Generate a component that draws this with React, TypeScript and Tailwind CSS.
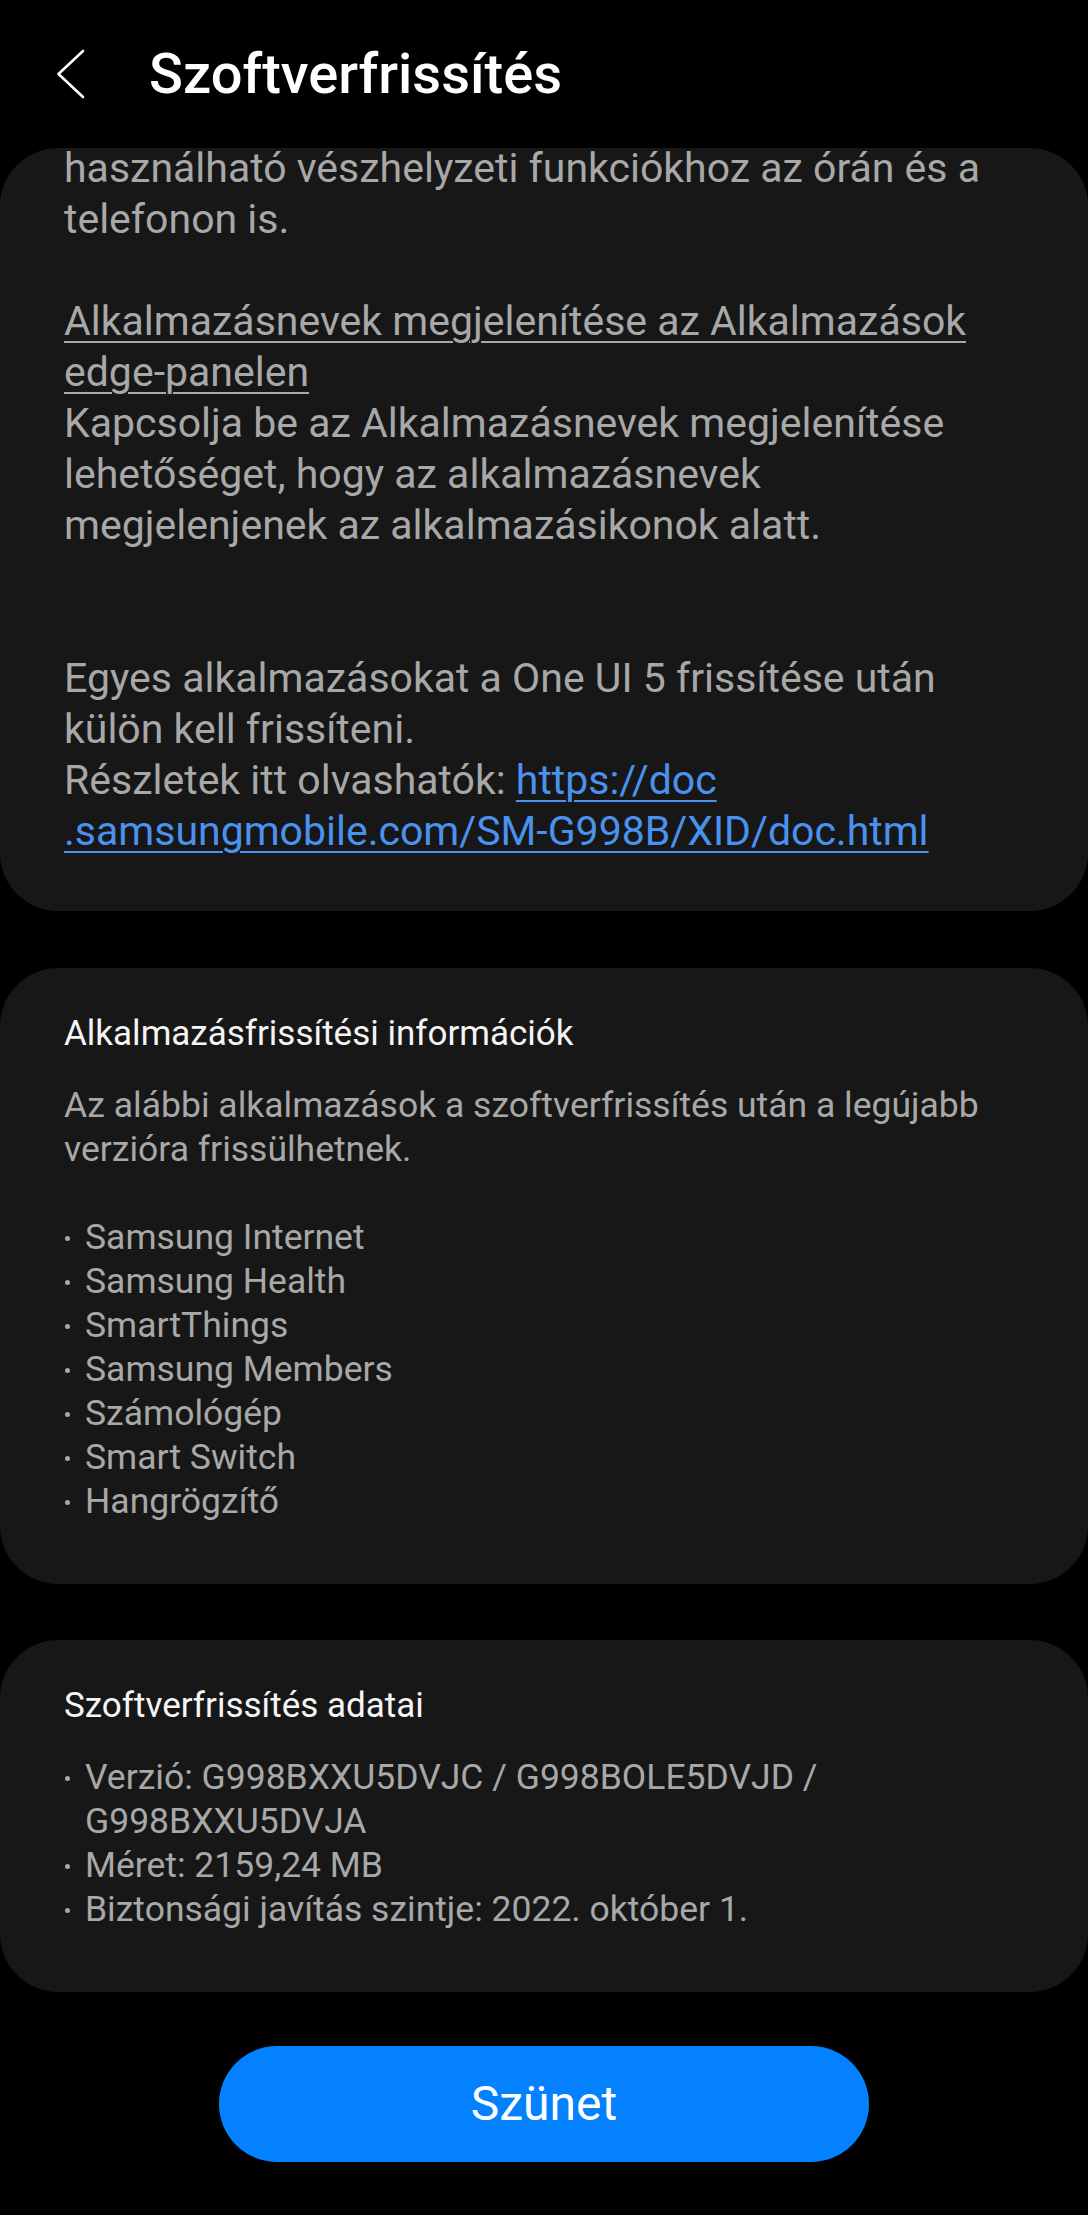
import React from "react";

const font = { fontFamily: "Roboto, 'Noto Sans', sans-serif" };

const Bullet = ({ children }: { children: React.ReactNode }) => (
  <div className="flex">
    <span className="w-[21px] shrink-0 pt-[21px]">
      <span className="block w-[5px] h-[5px] rounded-full bg-[#a8a8a8] ml-[1px]" />
    </span>
    <div>{children}</div>
  </div>
);

const InfoCard = ({ title, children }: { title: string; children: React.ReactNode }) => (
  <div className="bg-[#171717] rounded-[58px] pl-[64px] pr-[40px] pt-[44px] pb-[61px]">
    <div className="text-[35px] leading-[44px] text-[#f5f5f5] whitespace-nowrap">{title}</div>
    <div className="mt-[27px] text-[35.5px] leading-[44px] text-[#a8a8a8] whitespace-nowrap">{children}</div>
  </div>
);

export default function App() {
  const apps = [
    "Samsung Internet",
    "Samsung Health",
    "SmartThings",
    "Samsung Members",
    "Számológép",
    "Smart Switch",
    "Hangrögzítő",
  ];

  return (
    <div className="w-full min-h-[2215px] bg-black flex flex-col" style={font}>
      {/* header */}
      <div className="h-[148px] flex items-center pl-[56px] shrink-0">
        <svg width="30" height="50" viewBox="0 0 30 50" fill="none">
          <path d="M27 2 L2.5 25 L27 48" stroke="white" strokeWidth="2.6" strokeLinecap="round" strokeLinejoin="round" />
        </svg>
        <h1 className="ml-[63px] text-[56px] leading-none font-medium text-white">Szoftverfrissítés</h1>
      </div>

      {/* release notes card */}
      <div className="bg-[#171717] rounded-[58px] pl-[64px] pt-[1px] pb-[54px]">
        <div className="-mt-[6px] text-[41px] leading-[51px] text-[#a8a8a8] whitespace-nowrap">
          <div>használható vészhelyzeti funkciókhoz az órán és a</div>
          <div>telefonon is.</div>
          <div>&nbsp;</div>
          <div className="underline decoration-2 underline-offset-[6px]">Alkalmazásnevek megjelenítése az Alkalmazások</div>
          <div>
            <span className="underline decoration-2 underline-offset-[6px]">edge-panelen</span>
          </div>
          <div>Kapcsolja be az Alkalmazásnevek megjelenítése</div>
          <div>lehetőséget, hogy az alkalmazásnevek</div>
          <div>megjelenjenek az alkalmazásikonok alatt.</div>
          <div>&nbsp;</div>
          <div>&nbsp;</div>
          <div>Egyes alkalmazásokat a One UI 5 frissítése után</div>
          <div>külön kell frissíteni.</div>
          <div>
            Részletek itt olvashatók:{" "}
            <span className="text-[#4a92ee] underline decoration-2 underline-offset-[6px]">https://doc</span>
          </div>
          <div>
            <span className="text-[#4a92ee] underline decoration-2 underline-offset-[6px]">
              .samsungmobile.com/SM-G998B/XID/doc.html
            </span>
          </div>
        </div>
      </div>

      <div className="mt-[57px]">
        <InfoCard title="Alkalmazásfrissítési információk">
          <div>Az alábbi alkalmazások a szoftverfrissítés után a legújabb</div>
          <div>verzióra frissülhetnek.</div>
          <div>&nbsp;</div>
          {apps.map((a) => (
            <Bullet key={a}>{a}</Bullet>
          ))}
        </InfoCard>
      </div>

      <div className="mt-[56px]">
        <InfoCard title="Szoftverfrissítés adatai">
          <Bullet>
            <div>Verzió: G998BXXU5DVJC / G998BOLE5DVJD /</div>
            <div>G998BXXU5DVJA</div>
          </Bullet>
          <Bullet>Méret: 2159,24 MB</Bullet>
          <Bullet>Biztonsági javítás szintje: 2022. október 1.</Bullet>
        </InfoCard>
      </div>

      <div className="mt-[54px] flex justify-center">
        <button className="w-[650px] h-[116px] rounded-full bg-[#0381fe] text-white text-[48px] font-normal">
          Szünet
        </button>
      </div>
    </div>
  );
}
